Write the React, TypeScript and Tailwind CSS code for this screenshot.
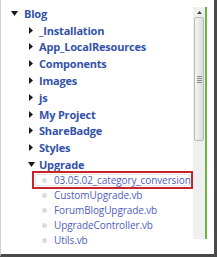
const folders = [
  "_Installation",
  "App_LocalResources",
  "Components",
  "Images",
  "js",
  "My Project",
  "ShareBadge",
  "Styles",
];

const files = [
  "03.05.02_category_conversion.sql",
  "CustomUpgrade.vb",
  "ForumBlogUpgrade.vb",
  "UpgradeController.vb",
  "Utils.vb",
];

function Collapsed() {
  return (
    <svg width="4" height="7" viewBox="0 0 4 7" className="shrink-0">
      <path d="M0 0 L4 3.5 L0 7 Z" fill="#1a1a1a" />
    </svg>
  );
}

function Expanded() {
  return (
    <svg width="7" height="5" viewBox="0 0 7 5" className="shrink-0">
      <path d="M0 0 L7 0 L3.5 5 Z" fill="#1a1a1a" />
    </svg>
  );
}

function FolderRow({ name, open, indent }: { name: string; open?: boolean; indent: string }) {
  return (
    <div className={`flex h-[16.8px] items-center ${indent}`}>
      <div className="flex justify-start">{open ? <Expanded /> : <Collapsed />}</div>
      <span className="font-bold text-[#3352a8]">{name}</span>
    </div>
  );
}

export default function App() {
  return (
    <div className="h-[260px] w-[217px] bg-white" style={{ fontFamily: '"Open Sans", "DejaVu Sans", sans-serif' }}>
      <div className="flex h-[257px] w-[217px] border-l border-[#cfcfcf] border-r-[3px] border-b-[3px] border-r-[#4a4a4a] border-b-[#4a4a4a]">
        <div className="w-[192px] overflow-hidden whitespace-nowrap pt-[5px] text-[11px] leading-none tracking-[-0.2px]">
          <FolderRow name="Blog" open indent="pl-[10px] [&>div]:w-[13px]" />
          {folders.map((f) => (
            <FolderRow key={f} name={f} indent="pl-[28px] [&>div]:w-[10px]" />
          ))}
          <FolderRow name="Upgrade" open indent="pl-[27px] [&>div]:w-[11px]" />
          {files.map((f, i) => (
            <div key={f} className="relative flex h-[15px] items-center pl-[41px]">
              {i === 0 && (
                <span className="absolute left-[31px] right-0 top-[-2px] bottom-[-1px] border-2 border-[#c8242c]">
                  <span className="absolute inset-[1px] border border-[#e6e6e6]" />
                </span>
              )}
              <span className="mr-[7px] h-[5px] w-[5px] shrink-0 rounded-full bg-[#dcdcdc]" />
              <span className="relative text-[10px] tracking-[-0.1px] text-[#4f60bb]">{f}</span>
            </div>
          ))}
        </div>
        <div className="flex w-[12px] flex-col pt-[7px]">
          <div className="flex h-[232px] flex-col bg-[#f0f0f0]">
            <div className="flex h-[10px] items-center justify-center">
              <svg width="5" height="3" viewBox="0 0 5 3">
                <path d="M0 3 L2.5 0 L5 3 Z" fill="#444" />
              </svg>
            </div>
            <div className="mx-[1px] flex h-[124px] items-center justify-center rounded-[2px] border border-[#b8b8b8] bg-gradient-to-r from-[#f4f4f4] to-[#dcdcdc]">
              <div className="flex flex-col gap-[1px]">
                <span className="h-px w-[5px] bg-[#8a8a8a]" />
                <span className="h-px w-[5px] bg-[#8a8a8a]" />
                <span className="h-px w-[5px] bg-[#8a8a8a]" />
                <span className="h-px w-[5px] bg-[#8a8a8a]" />
              </div>
            </div>
          </div>
        </div>
        <div className="mt-[7px] h-[232px] w-[2px] bg-[#6cb33f]" />
        <div className="flex-1" />
      </div>
    </div>
  );
}
